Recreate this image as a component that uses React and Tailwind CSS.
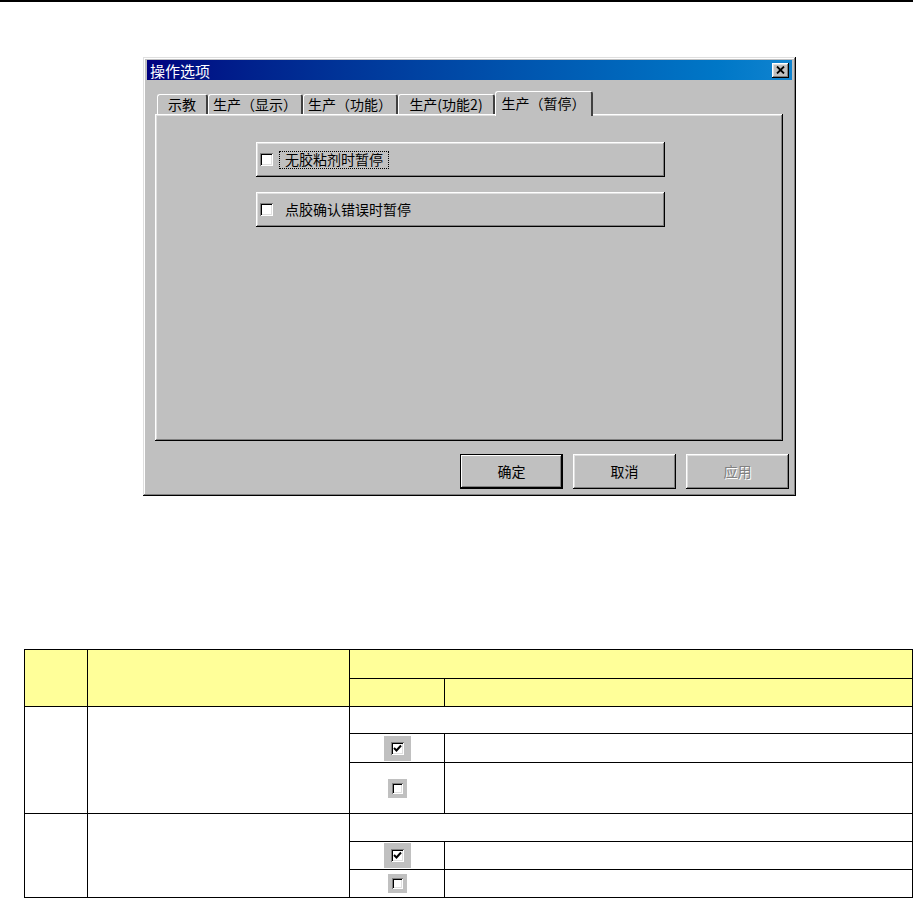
import React from "react";

const raised =
  "shadow-[inset_-1px_-1px_#000,inset_1px_1px_#fff,inset_-2px_-2px_#808080,inset_2px_2px_#dfdfdf]";
const sunken =
  "shadow-[inset_1px_1px_#808080,inset_-1px_-1px_#fff,inset_2px_2px_#000,inset_-2px_-2px_#dfdfdf]";

function Check({ checked }) {
  return (
    <div className={`w-[13px] h-[13px] bg-white ${sunken} flex items-center justify-center`}>
      {checked && (
        <svg width="9" height="9" viewBox="0 0 9 9">
          <path d="M1 4 L3.5 6.5 L8 1.5" stroke="#000" strokeWidth="2" fill="none" />
        </svg>
      )}
    </div>
  );
}

function Tab({ label, w, active }) {
  if (active) {
    return (
      <div
        className={`${w} h-[25px] -mb-[2px] relative z-10 bg-[#c0c0c0] border-l border-t border-white border-r-2 border-r-[#404040] rounded-t-[3px] flex items-start justify-center pt-[2px] text-[14px] leading-[18px] text-black`}
      >
        {label}
      </div>
    );
  }
  return (
    <div
      className={`${w} h-[20px] bg-[#c0c0c0] border-l border-t border-white border-r-2 border-r-[#404040] rounded-t-[3px] flex items-start justify-center pt-0 text-[14px] leading-[18px] text-black`}
    >
      {label}
    </div>
  );
}

function Group({ label, focus }) {
  return (
    <div className={`w-[409px] h-[35px] ${raised} bg-[#c0c0c0] flex items-center pl-[4px]`}>
      <Check />
      <div
        className={`ml-[6px] h-[18px] px-[6px] flex items-center text-[14px] text-black ${
          focus ? "outline outline-1 outline-dotted outline-black -outline-offset-1" : ""
        }`}
      >
        {label}
      </div>
    </div>
  );
}

function Btn({ label, primary, disabled }) {
  return (
    <div
      className={`w-[103px] h-[35px] bg-[#c0c0c0] flex items-center justify-center text-[14px] ${
        primary
          ? "border border-black shadow-[inset_-1px_-1px_#000,inset_1px_1px_#fff,inset_-2px_-2px_#808080]"
          : raised
      } ${disabled ? "text-[#808080] [text-shadow:1px_1px_0_#fff]" : "text-black"}`}
    >
      {label}
    </div>
  );
}

function TableCheck({ checked }) {
  if (checked) {
    return (
      <div className="w-[27px] h-[25px] bg-[#c0c0c0] mx-auto flex items-center justify-center">
        <Check checked />
      </div>
    );
  }
  return (
    <div className="w-[19px] h-[19px] bg-[#c0c0c0] mx-auto flex items-center justify-center">
      <div className={`w-[11px] h-[11px] bg-white ${sunken}`} />
    </div>
  );
}

export default function App() {
  const td = "border border-black p-0";
  return (
    <div className="w-[913px] h-[898px] bg-white [font-family:'Noto_Sans_CJK_SC','Noto_Sans',sans-serif] overflow-hidden">
      <div className="h-[2px] bg-black w-full" />
      <div
        className={`ml-[143px] mt-[55px] w-[653px] h-[439px] bg-[#c0c0c0] p-[4px] shadow-[inset_-1px_-1px_#000,inset_1px_1px_#dfdfdf,inset_-2px_-2px_#808080,inset_2px_2px_#fff] flex flex-col`}
      >
        <div className="h-[20px] -mt-px bg-gradient-to-r from-[#000080] to-[#1084d0] flex items-center justify-between pl-[3px] pr-[3px]">
          <span className="text-white text-[15px] leading-none">操作选项</span>
          <div
            className={`w-[17px] h-[15px] bg-[#c0c0c0] ${raised} flex items-center justify-center`}
          >
            <svg width="9" height="8" viewBox="0 0 9 8">
              <path d="M1 0.5 L8 7.5 M8 0.5 L1 7.5" stroke="#000" strokeWidth="1.8" fill="none" />
            </svg>
          </div>
        </div>
        <div className="pl-[8px] pr-[9px] pt-[11px]">
          <div className="flex items-end h-[23px] pl-[2px]">
            <Tab label="示教" w="w-[51px]" />
            <Tab label="生产（显示）" w="w-[95px]" />
            <Tab label="生产（功能）" w="w-[95px]" />
            <Tab label="生产(功能2)" w="w-[97px]" />
            <Tab label="生产（暂停）" w="w-[98px]" active />
          </div>
          <div
            className={`h-[327px] bg-[#c0c0c0] shadow-[inset_-1px_-1px_#000,inset_1px_1px_#fff,inset_-2px_-2px_#808080,inset_2px_2px_#dfdfdf] pl-[101px] pt-[28px] flex flex-col gap-[15px]`}
          >
            <Group label="无胶粘剂时暂停" focus />
            <Group label="点胶确认错误时暂停" />
          </div>
        </div>
        <div className="mt-[13px] flex justify-end gap-[10px] pr-[3px]">
          <Btn label="确定" primary />
          <Btn label="取消" />
          <Btn label="应用" disabled />
        </div>
      </div>

      <table className="ml-[24px] mt-[153px] w-[888px] border-collapse table-fixed">
        <colgroup>
          <col className="w-[63px]" />
          <col className="w-[262px]" />
          <col className="w-[95px]" />
          <col className="w-[468px]" />
        </colgroup>
        <tbody>
          <tr className="h-[29px] bg-[#ffff99]">
            <td className={td} rowSpan={2}></td>
            <td className={td} rowSpan={2}></td>
            <td className={td} colSpan={2}></td>
          </tr>
          <tr className="h-[28px] bg-[#ffff99]">
            <td className={td}></td>
            <td className={td}></td>
          </tr>
          <tr className="h-[27px]">
            <td className={td} rowSpan={3}></td>
            <td className={td} rowSpan={3}></td>
            <td className={td} colSpan={2}></td>
          </tr>
          <tr className="h-[29px]">
            <td className={td}>
              <TableCheck checked />
            </td>
            <td className={td}></td>
          </tr>
          <tr className="h-[51px]">
            <td className={td}>
              <TableCheck />
            </td>
            <td className={td}></td>
          </tr>
          <tr className="h-[28px]">
            <td className={td} rowSpan={3}></td>
            <td className={td} rowSpan={3}></td>
            <td className={td} colSpan={2}></td>
          </tr>
          <tr className="h-[28px]">
            <td className={td}>
              <TableCheck checked />
            </td>
            <td className={td}></td>
          </tr>
          <tr className="h-[28px]">
            <td className={td}>
              <TableCheck />
            </td>
            <td className={td}></td>
          </tr>
        </tbody>
      </table>
    </div>
  );
}
